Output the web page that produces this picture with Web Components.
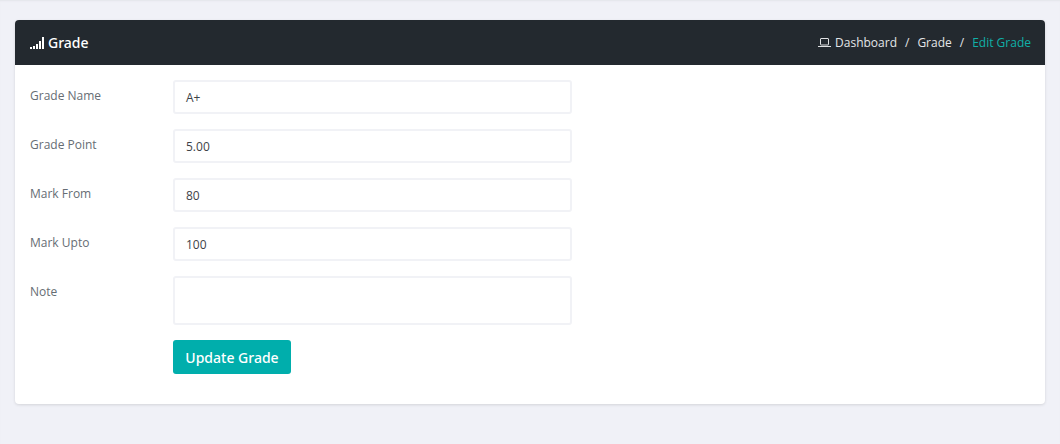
<!DOCTYPE html>
<html>
<head>
<meta charset="utf-8">
<title>Edit Grade</title>
<style>
    html, body { margin: 0; height: 100%; }
    body { background: #f0f1f7; font-family: "Open Sans", "Noto Sans", sans-serif; overflow: hidden; }
</style>
</head>
<body>
<grade-page>
    <grade-box>
        <grade-field label="Grade Name" value="A+"></grade-field>
        <grade-field label="Grade Point" value="5.00"></grade-field>
        <grade-field label="Mark From" value="80"></grade-field>
        <grade-field label="Mark Upto" value="100"></grade-field>
        <grade-field label="Note" multiline></grade-field>
        <grade-field><button-primary>Update Grade</button-primary></grade-field>
    </grade-box>
</grade-page>

<script>
// page wrapper, holds the grey background and the thin shadow from the top bar
class GradePage extends HTMLElement {
    constructor() {
        super();
        this.attachShadow({ mode: 'open' });
        this.shadowRoot.innerHTML = `
            <style>
                :host {
                    display: block;
                    padding: 20px 15px 0 15px;
                    height: 444px;
                    box-sizing: border-box;
                    box-shadow: inset 0 2px 2px -1px #e3e4ea;
                }
            </style>
            <slot></slot>
        `;
    }
}

// card with the dark header and breadcrumb
class GradeBox extends HTMLElement {
    constructor() {
        super();
        this.attachShadow({ mode: 'open' });
        this.shadowRoot.innerHTML = `
            <style>
                :host {
                    display: block;
                    background: #fff;
                    border-radius: 4px;
                    box-shadow: 0 1px 3px rgba(0, 0, 0, 0.12);
                    overflow: hidden;
                }
                header {
                    height: 45px;
                    background: #23292f;
                    display: flex;
                    align-items: center;
                    justify-content: space-between;
                    padding: 0 14px 0 15px;
                    color: #fff;
                }
                .title {
                    display: flex;
                    align-items: center;
                    gap: 3px;
                    font-family: "Noto Sans", "Open Sans", sans-serif;
                    font-size: 14px;
                    font-weight: 500;
                }
                .crumbs {
                    display: flex;
                    align-items: center;
                    font-size: 12px;
                    color: #e4e6e8;
                }
                .crumbs svg { margin-right: 4px; }
                .sep { padding: 0 8px; }
                .active { color: #10b0a8; }
                .body {
                    display: flex;
                    flex-direction: column;
                    gap: 15px;
                    padding: 15px 15px 30px 15px;
                }
            </style>
            <header>
                <div class="title">
                    <svg width="15" height="12" viewBox="0 0 15 12" fill="#fff">
                        <rect x="0" y="10" width="2" height="2"/>
                        <rect x="3" y="9" width="2" height="3"/>
                        <rect x="6" y="7" width="2" height="5"/>
                        <rect x="9" y="4" width="2" height="8"/>
                        <rect x="12" y="0" width="2" height="12"/>
                    </svg>
                    <span>Grade</span>
                </div>
                <div class="crumbs">
                    <svg width="13" height="10" viewBox="0 0 13 10" fill="none" stroke="#dfe1e3">
                        <rect x="2.5" y="0.5" width="8" height="6.5" rx="0.5"/>
                        <path d="M0 8.5h13"/>
                    </svg>
                    <span>Dashboard</span>
                    <span class="sep">/</span>
                    <span>Grade</span>
                    <span class="sep">/</span>
                    <span class="active">Edit Grade</span>
                </div>
            </header>
            <div class="body"><slot></slot></div>
        `;
    }
}

// label + input row, empty label column if only slotted content is given
class GradeField extends HTMLElement {
    constructor() {
        super();
        this.attachShadow({ mode: 'open' });
        this.shadowRoot.innerHTML = `
            <style>
                :host {
                    display: grid;
                    grid-template-columns: 143px 399px;
                    font-size: 12px;
                }
                label {
                    color: #666d74;
                    padding-top: 7px;
                    line-height: 17px;
                }
                .control {
                    box-sizing: border-box;
                    height: 34px;
                    border: 2px solid #f1f2f6;
                    border-radius: 3px;
                    padding: 0 11px;
                    display: flex;
                    align-items: center;
                    color: #3d4248;
                    background: #fff;
                }
                .control.tall { height: 49px; }
            </style>
            <label></label>
            <div class="slot-wrap"><slot></slot></div>
        `;
    }

    connectedCallback() {
        this.shadowRoot.querySelector('label').textContent = this.getAttribute('label') || '';
        if (this.hasAttribute('label')) {
            const box = document.createElement('div');
            box.className = 'control';
            if (this.hasAttribute('multiline')) {
                box.classList.add('tall');
            }
            box.textContent = this.getAttribute('value') || '';
            const wrap = this.shadowRoot.querySelector('.slot-wrap');
            wrap.innerHTML = '';
            wrap.appendChild(box);
        }
    }
}

class ButtonPrimary extends HTMLElement {
    constructor() {
        super();
        this.attachShadow({ mode: 'open' });
        this.shadowRoot.innerHTML = `
            <style>
                :host {
                    display: inline-flex;
                    align-items: center;
                    box-sizing: border-box;
                    height: 34px;
                    width: 118px;
                    justify-content: center;
                    background: #00aeac;
                    border-radius: 3px;
                    color: #fff;
                    font-family: "Noto Sans", "Open Sans", sans-serif;
                    font-size: 14px;
                    font-weight: 500;
                    cursor: pointer;
                }
            </style>
            <slot></slot>
        `;
    }
}

customElements.define('grade-page', GradePage);
customElements.define('grade-box', GradeBox);
customElements.define('grade-field', GradeField);
customElements.define('button-primary', ButtonPrimary);
</script>
</body>
</html>
